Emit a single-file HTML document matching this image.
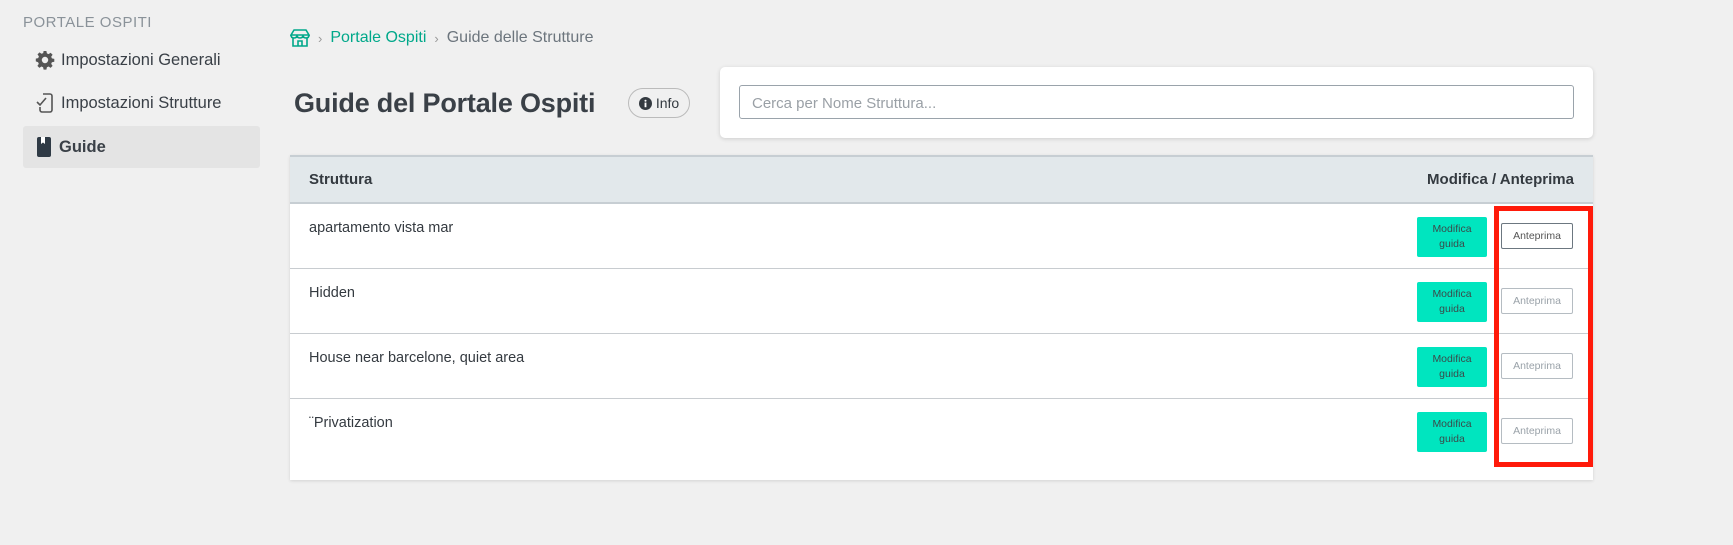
<!DOCTYPE html>
<html><head><meta charset="utf-8"><style>
*{box-sizing:border-box;margin:0;padding:0}
body{width:1733px;height:545px;background:#f0f0f0;font-family:"Liberation Sans",Arial,sans-serif;color:#343a40;position:relative;overflow:hidden}
.abs{position:absolute}
.side-h{left:23px;top:13px;font-size:15px;color:#8a9299;letter-spacing:.5px}
.item{left:23px;width:237px;height:42px;font-size:16.5px;color:#3a4047;display:flex;align-items:center;padding-left:12px}
.item svg{margin-right:6px}
.active{background:#e4e4e4;border-radius:3px;font-weight:bold}
.bc{left:290px;top:29px;font-size:16px;display:flex;align-items:center;color:#6c757d}
.bc .g{color:#00a88a}
.title{left:294px;top:88px;font-size:27px;font-weight:bold;color:#3a4047;letter-spacing:-0.2px}
.info{left:628px;top:88px;width:62px;height:30px;border:1px solid #bbb;border-radius:15px;font-size:14px;display:flex;align-items:center;justify-content:center;gap:4px}
.card{left:720px;top:67px;width:873px;height:71px;background:#fff;border-radius:5px;box-shadow:0 1px 4px rgba(0,0,0,.15)}
.input{left:19px;top:18px;width:835px;height:34px;border:1px solid #9aa3ab;border-radius:3px;font-size:15px;color:#9aa0a6;padding:9px 12px}
.table{left:290px;top:155px;width:1303px;height:325px;background:#fff;box-shadow:0 1px 3px rgba(0,0,0,.12)}
.th{height:49px;background:#e2e8eb;border-top:2px solid #c7ced3;border-bottom:2px solid #c7ced3;font-weight:bold;font-size:15px;display:flex;align-items:center;justify-content:space-between;padding:0 19px}
.row{position:relative;height:65px;border-bottom:1px solid #c8ccd0;font-size:14.5px;padding:16px 19px}
.row:last-child{border-bottom:none;height:80px}
.mod{position:absolute;left:1127px;top:13px;width:70px;height:40px;background:#00e5bf;border-radius:2px;font-size:10.5px;color:#3a4a4a;text-align:center;line-height:15px;padding-top:5px}
.ant{position:absolute;left:1211px;top:19px;width:72px;height:26px;border:1px solid #b5bcc2;border-radius:2px;font-size:10.5px;color:#9aa2a9;text-align:center;line-height:24px}
.ant.first{border-color:#6c7780;color:#555}
.red{left:1494px;top:206px;width:99px;height:261px;border:5px solid #ff1a0a}
</style></head><body>
<div class="abs side-h" style="top:14px">PORTALE OSPITI</div>
<div class="abs item" style="top:39px"><svg width="20" height="20" viewBox="0 0 20 20"><path fill="#555" d="M8.6 1h2.8l.5 2.4 1.7.7 2-1.4 2 2-1.4 2 .7 1.7 2.4.5v2.8l-2.4.5-.7 1.7 1.4 2-2 2-2-1.4-1.7.7-.5 2.4H8.6l-.5-2.4-1.7-.7-2 1.4-2-2 1.4-2-.7-1.7L.8 11.4V8.6l2.4-.5.7-1.7-1.4-2 2-2 2 1.4 1.7-.7zM10 6.8a3.2 3.2 0 100 6.4 3.2 3.2 0 000-6.4z"/></svg>Impostazioni Generali</div>
<div class="abs item" style="top:82px"><svg width="20" height="22" viewBox="0 0 20 22"><path fill="none" stroke="#555" stroke-width="1.6" d="M8 2h7a2 2 0 012 2v14a2 2 0 01-2 2H7a2 2 0 01-2-2v-3M2 10l3 3 6-7"/></svg>Impostazioni Strutture</div>
<div class="abs item active" style="top:126px"><svg width="18" height="22" viewBox="0 0 18 22"><rect x="2" y="1" width="14" height="20" rx="2" fill="#2f3a45"/><path d="M6 1v7l2-1.5L10 8V1z" fill="#fff"/></svg>Guide</div>
<div class="abs bc"><svg width="20" height="18" viewBox="0 0 20 18" style="margin-right:8px"><path fill="none" stroke="#00a88a" stroke-width="1.6" d="M4 1h12l3 5H1zM1 6q0 3 3 3t3-3q0 3 3 3t3-3q0 3 3 3t3-3M3 9v8h14V9M8 17v-5h4v5"/></svg><span style="color:#999;margin-right:8px;font-size:13px">›</span><span class="g">Portale Ospiti</span><span style="color:#999;margin:0 8px;font-size:13px">›</span>Guide delle Strutture</div>
<div class="abs title">Guide del Portale Ospiti</div>
<div class="abs info"><svg width="13" height="13" viewBox="0 0 14 14"><circle cx="7" cy="7" r="7" fill="#343a40"/><rect x="6" y="6" width="2" height="5" fill="#fff"/><circle cx="7" cy="4" r="1.1" fill="#fff"/></svg>Info</div>
<div class="abs card"><div class="abs input">Cerca per Nome Struttura...</div></div>
<div class="abs table">
<div class="th"><span>Struttura</span><span>Modifica / Anteprima</span></div>
<div class="row">apartamento vista mar<div class="mod">Modifica<br>guida</div><div class="ant first">Anteprima</div></div>
<div class="row">Hidden<div class="mod">Modifica<br>guida</div><div class="ant">Anteprima</div></div>
<div class="row">House near barcelone, quiet area<div class="mod">Modifica<br>guida</div><div class="ant">Anteprima</div></div>
<div class="row">¨Privatization<div class="mod">Modifica<br>guida</div><div class="ant">Anteprima</div></div>
</div>
<div class="abs red"></div>
</body></html>
